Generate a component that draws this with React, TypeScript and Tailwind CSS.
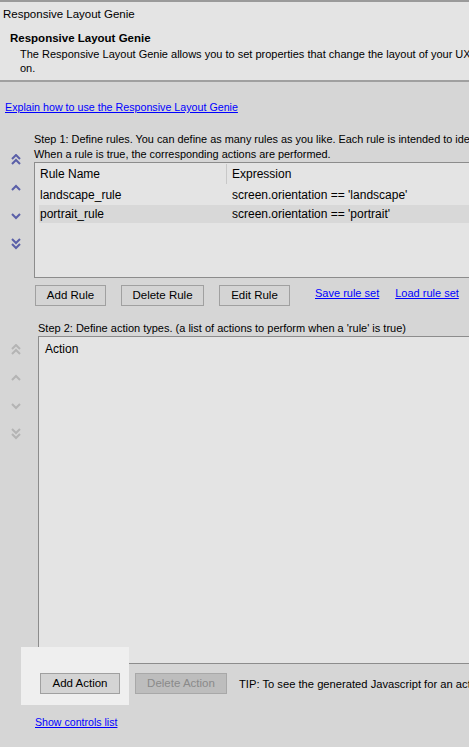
import React from "react";

const FONT = { fontFamily: '"Liberation Sans", Arial, sans-serif' };

// chevrons for the reorder column
function Chevron({ dir, double, disabled }: { dir: "up" | "down"; double?: boolean; disabled?: boolean }) {
  const color = disabled ? "#b4b4b4" : "#5a5fa8";
  const one = (y: number) =>
    dir === "up" ? `M2 ${y + 4} L6 ${y} L10 ${y + 4}` : `M2 ${y} L6 ${y + 4} L10 ${y}`;
  return (
    <svg width="12" height="12" viewBox="0 0 12 12" className="shrink-0">
      {double ? (
        <>
          <path d={one(1)} fill="none" stroke={color} strokeWidth="2" />
          <path d={one(6)} fill="none" stroke={color} strokeWidth="2" />
        </>
      ) : (
        <path d={one(4)} fill="none" stroke={color} strokeWidth="2" />
      )}
    </svg>
  );
}

function Btn({ label, disabled, w }: { label: string; disabled?: boolean; w: string }) {
  return (
    <button
      className={`${w} shrink-0 h-[21px] border text-[11.5px] leading-none ${
        disabled ? "bg-[#bdbdbd] border-[#a8a8a8] text-[#8a8a8a]" : "bg-[#d4d4d4] border-[#a0a0a0] text-black"
      }`}
    >
      {label}
    </button>
  );
}

export default function App() {
  return (
    <div
      className="w-[469px] h-[747px] overflow-hidden bg-[#d6d6d6] text-[11px] leading-[14px] text-black"
      style={FONT}
    >
      {/* header */}
      <div className="bg-[#e4e4e4] border-t-2 border-[#9a9a9a] border-b-2 border-b-[#a0a0a0] h-[82px] whitespace-nowrap">
        <div className="pl-[3px] pt-[5px] text-[11.5px]">Responsive Layout Genie</div>
        <div className="pl-[10px] pt-[10px] text-[11.5px] font-bold">Responsive Layout Genie</div>
        <div className="pl-[20px] pt-[2px]">
          The Responsive Layout Genie allows you to set properties that change the layout of your UX design based
          <br />
          on.
        </div>
      </div>

      <div className="pl-[5px] pt-[18px]">
        <a className="text-[#0000ff] underline text-[10.7px]">Explain how to use the Responsive Layout Genie</a>
      </div>

      {/* step 1 */}
      <div className="flex mt-[18px]">
        <div className="w-[34px] shrink-0 flex flex-col items-center pt-[22px] gap-[16px] pr-[2px]">
          <Chevron dir="up" double />
          <Chevron dir="up" />
          <Chevron dir="down" />
          <Chevron dir="down" double />
        </div>
        <div className="flex-1 min-w-0 whitespace-nowrap">
          <div className="leading-[15px] text-[10.9px]">
            Step 1: Define rules. You can define as many rules as you like. Each rule is intended to identify a device
            <br />
            When a rule is true, the corresponding actions are performed.
          </div>
          <div className="h-[116px] w-[500px] bg-[#e4e4e4] border border-[#8c8c8c] text-[12px]">
            <div className="flex h-[22px] items-center">
              <div className="w-[192px] pl-[5px] border-r border-[#c8c8c8] h-[20px] flex items-center">Rule Name</div>
              <div className="pl-[5px]">Expression</div>
            </div>
            <div className="flex h-[20px] items-center mx-[4px]">
              <div className="w-[188px] pl-[1px]">landscape_rule</div>
              <div className="pl-[5px]">screen.orientation == 'landscape'</div>
            </div>
            <div className="flex h-[18px] items-center mx-[4px] bg-[#d8d8d8]">
              <div className="w-[188px] pl-[1px]">portrait_rule</div>
              <div className="pl-[5px]">screen.orientation == 'portrait'</div>
            </div>
          </div>
          <div className="flex items-center mt-[7px] pl-[1px]">
            <Btn label="Add Rule" w="w-[71px]" />
            <div className="w-[15px] shrink-0" />
            <Btn label="Delete Rule" w="w-[83px]" />
            <div className="w-[15px] shrink-0" />
            <Btn label="Edit Rule" w="w-[71px]" />
            <a className="ml-[25px] text-[#0000ff] underline -mt-[6px]">Save rule set</a>
            <a className="ml-[16px] text-[#0000ff] underline -mt-[6px]">Load rule set</a>
          </div>
        </div>
      </div>

      {/* step 2 */}
      <div className="flex mt-[15px]">
        <div className="w-[34px] shrink-0 flex flex-col items-center pt-[23px] gap-[16px] pr-[2px]">
          <Chevron dir="up" double disabled />
          <Chevron dir="up" disabled />
          <Chevron dir="down" disabled />
          <Chevron dir="down" double disabled />
        </div>
        <div className="flex-1 min-w-0 whitespace-nowrap pl-[4px]">
          <div className="leading-[15px]">
            Step 2: Define action types. (a list of actions to perform when a 'rule' is true)
          </div>
          <div className="h-[328px] w-[500px] bg-[#e4e4e4] border border-[#8c8c8c] border-r-0">
            <div className="pl-[6px] pt-[5px] text-[12px]">Action</div>
          </div>
        </div>
      </div>

      <div className="flex items-start -mt-[17px] relative">
        <div className="ml-[21px] w-[108px] h-[58px] shrink-0 bg-[#efefef] pt-[26px] pl-[19px]">
          <Btn label="Add Action" w="w-[80px]" />
        </div>
        <div className="ml-[6px] mt-[26px] flex items-center whitespace-nowrap">
          <Btn label="Delete Action" disabled w="w-[92px]" />
          <span className="ml-[12px] text-[11.2px]">TIP: To see the generated Javascript for an action, select it</span>
        </div>
      </div>

      <div className="pl-[35px] pt-[10px]">
        <a className="text-[#0000ff] underline text-[10.6px]">Show controls list</a>
      </div>
    </div>
  );
}
